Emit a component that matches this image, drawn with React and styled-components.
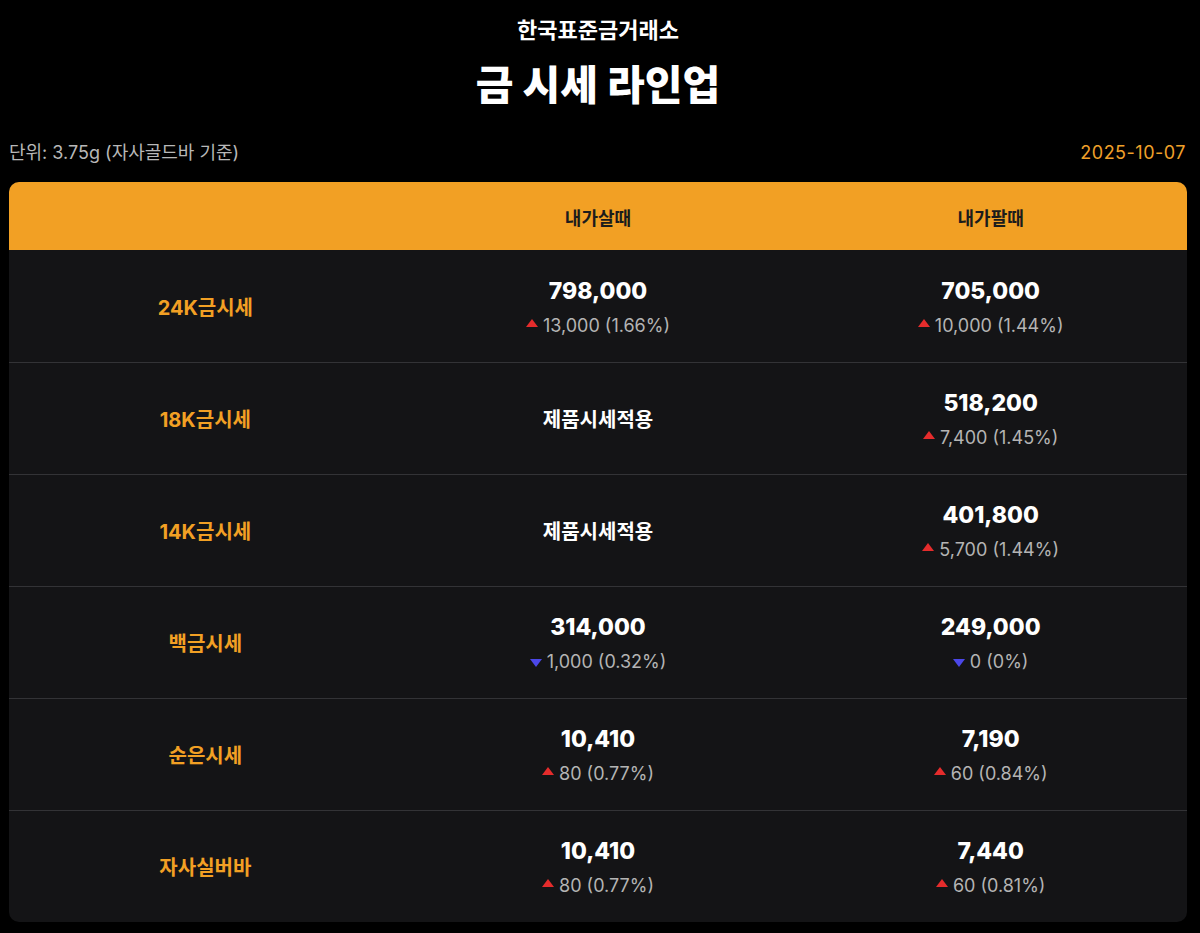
import React from "react";
import styled, { createGlobalStyle } from "styled-components";

const GlobalStyle = createGlobalStyle`
  html, body {
    margin: 0;
    padding: 0;
    background: #000;
  }
  body {
    font-family: Inter, "Noto Sans CJK KR", sans-serif;
    color: #fff;
  }
`;

const Page = styled.div`
  padding: 15px 13px 0 9px;
`;

const Brand = styled.div`
  text-align: center;
  font-size: 22px;
  font-weight: 700;
  line-height: 30px;
`;

const Title = styled.h1`
  margin: 15px 0 0;
  text-align: center;
  font-size: 41px;
  font-weight: 800;
  line-height: 50px;
`;

const InfoRow = styled.div`
  display: flex;
  justify-content: space-between;
  align-items: center;
  margin-top: 31px;
  font-size: 18px;
  line-height: 24px;
  color: #b8b8b8;
`;

const DateText = styled.span`
  color: #f0a02a;
  padding-right: 1px;
  letter-spacing: 0.5px;
`;

const Table = styled.div`
  margin-top: 17px;
  border-radius: 10px;
  overflow: hidden;
  background: #141416;
`;

const Row = styled.div`
  display: grid;
  grid-template-columns: repeat(3, 1fr);
  align-items: center;
  height: ${({ $head }) => ($head ? "68px" : "111px")};
  background: ${({ $head }) => ($head ? "#f2a024" : "transparent")};
  border-top: ${({ $first, $head }) =>
    $head ? "none" : $first ? "1px solid #141416" : "1px solid #333336"};
`;

const HeadCell = styled.div`
  text-align: center;
  font-size: 18px;
  font-weight: 700;
  color: #1c1c1c;
  padding-top: 2px;
`;

const Label = styled.div`
  text-align: center;
  font-size: 20px;
  font-weight: 700;
  color: #f2a024;
`;

const Cell = styled.div`
  display: flex;
  flex-direction: column;
  align-items: center;
  gap: 10px;
`;

const Price = styled.div`
  font-size: 23px;
  font-weight: 800;
  line-height: 28px;
  color: #fff;
`;

const Plain = styled.div`
  font-size: 20px;
  font-weight: 700;
  color: #fff;
`;

const Change = styled.div`
  display: flex;
  align-items: center;
  gap: 5px;
  font-size: 18px;
  line-height: 22px;
  color: #b4b4b4;
`;

const Tri = styled.span`
  width: 0;
  height: 0;
  border-left: 6px solid transparent;
  border-right: 6px solid transparent;
  ${({ $down }) =>
    $down
      ? "border-top: 8px solid #4b47e8; margin-top: 2px;"
      : "border-bottom: 8px solid #e52c2c; margin-top: -6px;"}
`;

const rows = [
  { label: "24K금시세", buy: ["798,000", "13,000 (1.66%)"], sell: ["705,000", "10,000 (1.44%)"] },
  { label: "18K금시세", buy: null, sell: ["518,200", "7,400 (1.45%)"] },
  { label: "14K금시세", buy: null, sell: ["401,800", "5,700 (1.44%)"] },
  { label: "백금시세", buy: ["314,000", "1,000 (0.32%)", true], sell: ["249,000", "0 (0%)", true] },
  { label: "순은시세", buy: ["10,410", "80 (0.77%)"], sell: ["7,190", "60 (0.84%)"] },
  { label: "자사실버바", buy: ["10,410", "80 (0.77%)"], sell: ["7,440", "60 (0.81%)"] },
];

const PriceCell = ({ data }) => {
  if (!data) {
    return (
      <Cell>
        <Plain>제품시세적용</Plain>
      </Cell>
    );
  }
  const [price, diff, down] = data;
  return (
    <Cell>
      <Price>{price}</Price>
      <Change>
        <Tri $down={down} />
        {diff}
      </Change>
    </Cell>
  );
};

export default function App() {
  return (
    <>
      <GlobalStyle />
      <Page>
        <Brand>한국표준금거래소</Brand>
        <Title>금 시세 라인업</Title>
        <InfoRow>
          <span>단위: 3.75g (자사골드바 기준)</span>
          <DateText>2025-10-07</DateText>
        </InfoRow>
        <Table>
          <Row $head>
            <HeadCell />
            <HeadCell>내가살때</HeadCell>
            <HeadCell>내가팔때</HeadCell>
          </Row>
          {rows.map((r, i) => (
            <Row key={r.label} $first={i === 0}>
              <Label>{r.label}</Label>
              <PriceCell data={r.buy} />
              <PriceCell data={r.sell} />
            </Row>
          ))}
        </Table>
      </Page>
    </>
  );
}
